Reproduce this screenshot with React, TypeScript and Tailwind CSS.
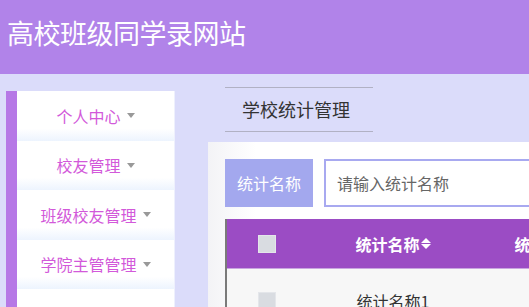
import React from 'react';

const font = { fontFamily: '"Noto Sans CJK SC", "Noto Sans", sans-serif' };

const menu = ['个人中心', '校友管理', '班级校友管理', '学院主管管理', '学校统计管理'];

const Caret = () => (
  <span className="ml-[6px] inline-block w-0 h-0 border-l-[4px] border-r-[4px] border-t-[5px] border-l-transparent border-r-transparent border-t-[#999999]" />
);

const SortIcon = () => (
  <span className="ml-[1px] inline-flex flex-col gap-[1px]">
    <span className="w-0 h-0 border-l-[5px] border-r-[5px] border-b-[5px] border-l-transparent border-r-transparent border-b-white" />
    <span className="w-0 h-0 border-l-[5px] border-r-[5px] border-t-[5px] border-l-transparent border-r-transparent border-t-white" />
  </span>
);

const Check = () => <span className="block w-[18px] h-[18px] bg-[#d9dce1] border border-[#e4e6ea]" />;

export default function App() {
  return (
    <div className="w-[529px] h-[307px] overflow-hidden bg-[#dbdcfa]" style={font}>
      {/* header */}
      <div className="h-[74px] bg-[#b183e9] flex items-center pl-[7px] pb-[10px]">
        <h1 className="text-white text-[27px] leading-none tracking-[-0.5px]">高校班级同学录网站</h1>
      </div>

      <div className="flex items-start">
        {/* sidebar */}
        <div className="ml-[6px] mt-[17px] w-[169px] flex shrink-0 border-r border-[#eef0fd]">
          <div className="w-[11px] bg-[#b678e6] self-stretch" />
          <ul className="flex-1 bg-white">
            {menu.map((m) => (
              <li
                key={m}
                className="h-[49.5px] flex items-center justify-center text-[16px] text-[#d259da] bg-gradient-to-b from-white from-75% to-[#edf4fe]"
              >
                {m}
                <Caret />
              </li>
            ))}
          </ul>
        </div>

        {/* main */}
        <div className="ml-[33px] w-[600px] shrink-0">
          <div className="ml-[17px] mt-[13px] w-[148px] h-[45px] border-y border-[#b1b1c4] flex items-center pl-[17px] text-[18px] text-[#333333]">
            学校统计管理
          </div>

          <div className="mt-[10px] pt-[17px] pl-[17px] h-[200px] bg-gradient-to-r from-[#f3f3f6] to-white to-[48px]">
            <div className="flex gap-[11px] h-[48px]">
              <div className="w-[88px] bg-[#a3a8ee] text-white text-[16px] flex items-center justify-center">
                统计名称
              </div>
              <div className="flex-1 border-2 border-[#a8a9f0] bg-white flex items-center pl-[11px] text-[16px] text-[#666666]">
                请输入统计名称
              </div>
            </div>

            <div className="mt-[12px] border-l-2 border-[#7a7a7a]">
              <div className="h-[49px] bg-[#9b4cc4] flex items-center text-white text-[16px] font-bold">
                <div className="w-[80px] flex justify-center">
                  <Check />
                </div>
                <div className="w-[172px] flex items-center justify-center">
                  统计名称
                  <SortIcon />
                </div>
                <div className="w-[146px] flex items-center justify-center">
                  统计数量
                  <SortIcon />
                </div>
              </div>
              <div className="h-[64px] bg-[#f7f7f7] border-t border-[#c9a6e0] flex items-center text-[16px] text-[#333333]">
                <div className="w-[80px] flex justify-center">
                  <Check />
                </div>
                <div className="w-[172px] text-center">统计名称1</div>
              </div>
            </div>
          </div>
        </div>
      </div>
    </div>
  );
}
